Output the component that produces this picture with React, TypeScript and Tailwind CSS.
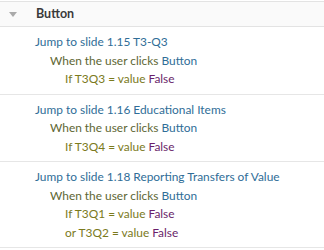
const font = { fontFamily: 'Lato, "Open Sans", sans-serif' };

function Val({ v }: { v: string }) {
  return <span className="text-[#6a1f6b]">{v}</span>;
}

function Rule({ jump, conds }: { jump: string; conds: { pre: string; cond: string }[] }) {
  return (
    <div className="border-b border-[#e6e6e6] pt-[6px] pb-[5px] text-[11.9px] leading-[18.5px]">
      <div className="pl-[35px] text-[#2f6d97]">Jump to slide {jump}</div>
      <div className="pl-[50px] text-[#5e6633]">
        When the <span>user</span> clicks <span className="text-[#2f6d97]">Button</span>
      </div>
      {conds.map((c, i) => (
        <div key={i} className="pl-[65px] text-[#7b7a1c]">
          {c.pre} {c.cond} = value <Val v="False" />
        </div>
      ))}
    </div>
  );
}

export default function App() {
  return (
    <div className="w-[324px] h-[250px] bg-white overflow-hidden" style={font}>
      <div className="mt-[1px] h-[26px] flex items-center bg-[#fafafa] border-t border-b border-[#e3e3e3]">
        <span className="ml-[9px] w-0 h-0 border-l-[4px] border-r-[4px] border-t-[5px] border-l-transparent border-r-transparent border-t-[#aaaaaa]" />
        <span className="ml-[19px] text-[12.5px] font-bold text-[#3a3a3a]">Button</span>
      </div>
      <Rule jump="1.15 T3-Q3" conds={[{ pre: "If", cond: "T3Q3" }]} />
      <Rule jump="1.16 Educational Items" conds={[{ pre: "If", cond: "T3Q4" }]} />
      <Rule
        jump="1.18 Reporting Transfers of Value"
        conds={[
          { pre: "If", cond: "T3Q1" },
          { pre: "or", cond: "T3Q2" },
        ]}
      />
    </div>
  );
}
